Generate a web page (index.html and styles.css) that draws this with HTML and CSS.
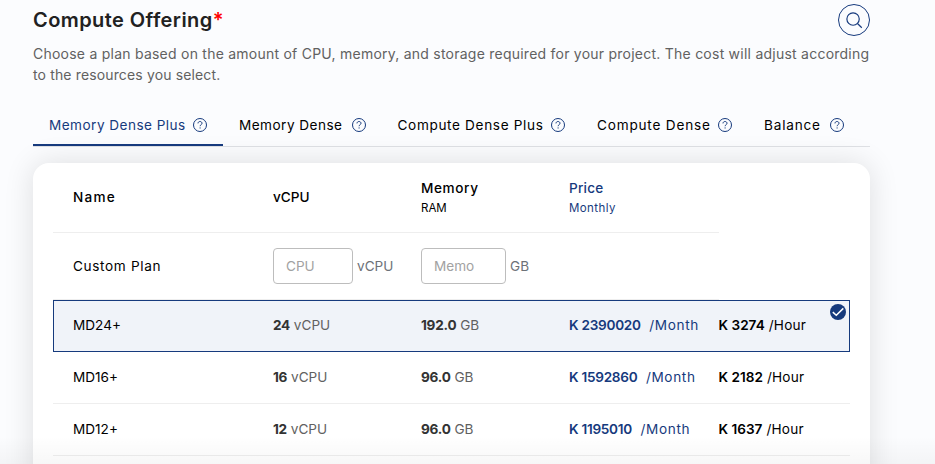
FILE: index.html
```html
<!DOCTYPE html>
<html lang="en">
<head>
<meta charset="utf-8">
<title>Compute Offering</title>
<link rel="stylesheet" href="styles.css">
</head>
<body>
<svg class="defs" aria-hidden="true">
  <symbol id="help" viewBox="0 0 14 14"><circle cx="7" cy="7" r="6.5"/><path d="M5 5.4C5.1 4.1 5.9 3.5 7 3.5s2 .7 2 1.8c0 1.4-1.9 1.4-1.9 2.9M7.1 9.4v1.1"/></symbol>
</svg>
<main class="page">
  <header class="heading">
    <h1 class="title">Compute Offering<span class="required">*</span></h1>
    <button class="search" aria-label="Search"><svg viewBox="0 0 32 32"><circle cx="15" cy="15" r="6.6"/><path d="M19.7 19.7l4.6 4.6"/></svg></button>
  </header>
  <p class="intro"><span class="line first">Choose a plan based on the amount of CPU, memory, and storage required for your project. The cost will adjust according</span> <span class="line second">to the resources you select.</span></p>
  <nav class="tabs">
    <a class="tab active"><span class="label">Memory Dense Plus</span><svg class="help"><use href="#help"/></svg></a>
    <a class="tab"><span class="label">Memory Dense</span><svg class="help"><use href="#help"/></svg></a>
    <a class="tab wide"><span class="label">Compute Dense Plus</span><svg class="help"><use href="#help"/></svg></a>
    <a class="tab wider"><span class="label">Compute Dense</span><svg class="help"><use href="#help"/></svg></a>
    <a class="tab wider"><span class="label">Balance</span><svg class="help"><use href="#help"/></svg></a>
  </nav>
  <section class="card">
    <div class="row head">
      <div class="th wide-name">Name</div>
      <div class="th">vCPU</div>
      <div class="th"><span class="memory-title">Memory</span><small>RAM</small></div>
      <div class="th blue">Price<small class="monthly">Monthly</small></div>
    </div>
    <div class="row custom">
      <div class="name custom-name">Custom Plan</div>
      <div class="field"><input class="cpu" placeholder="CPU"><span>vCPU</span></div>
      <div class="field"><input class="memory" placeholder="Memo"><span>GB</span></div>
    </div>
    <div class="row plan selected">
      <div class="name">MD24+</div>
      <div class="spec"><b>24</b> vCPU</div>
      <div class="spec"><b>192.0</b> GB</div>
      <div class="month"><b>K 2390020</b><span>/Month</span></div>
      <div class="hour"><b>K 3274</b> /Hour</div>
      <svg class="check" viewBox="0 0 16 16"><circle cx="8" cy="8" r="8"/><path d="M2.8 8.1l3.5 3.2 7-6.9"/></svg>
    </div>
    <div class="row plan">
      <div class="name">MD16+</div>
      <div class="spec"><b>16</b> vCPU</div>
      <div class="spec"><b>96.0</b> GB</div>
      <div class="month"><b>K 1592860</b><span>/Month</span></div>
      <div class="hour"><b>K 2182</b> /Hour</div>
    </div>
    <div class="row plan">
      <div class="name">MD12+</div>
      <div class="spec"><b>12</b> vCPU</div>
      <div class="spec"><b>96.0</b> GB</div>
      <div class="month"><b>K 1195010</b><span>/Month</span></div>
      <div class="hour"><b>K 1637</b> /Hour</div>
    </div>
  </section>
</main>
<div class="fade"></div>
</body>
</html>
```
FILE: styles.css
```css
* { box-sizing: border-box; }
body {
  margin: 0;
  height: 464px;
  background: #fbfcfe;
  color: #000;
  font: 400 13.6px/21px Inter, "Liberation Sans", sans-serif;
}
svg { fill: none; stroke: #163a7d; }
.defs { position: absolute; width: 0; height: 0; }
.page { width: 837px; height: 464px; overflow-x: visible; overflow-y: clip; margin-left: 33px; padding-top: 4px; }
.heading { display: flex; justify-content: space-between; height: 32px; }
.title { margin: 0; font-size: 20px; font-weight: 600; line-height: 32px; color: #212121; letter-spacing: .42px; }
.required { color: #f00; }
.search { width: 32px; height: 32px; padding: 0; border: 1px solid #163a7d; border-radius: 50%; background: none; }
.search svg { display: block; width: 30px; height: 30px; stroke-width: 1.25; }
.intro { margin: 7px 0 0; color: #616161; font-size: 14px; white-space: nowrap; }
.line { display: block; }
.first { letter-spacing: .238px; }
.second { letter-spacing: .14px; }
.tabs { display: grid; grid-template-columns: 190px 158.5px 199.5px 167px 112px; height: 43px; margin-top: 19px; border-bottom: 1px solid #dfe1e5; }
.tab { display: flex; align-items: center; justify-content: space-between; height: 42px; padding: 0 16px; white-space: nowrap; letter-spacing: .46px; }
.tab.wide { letter-spacing: .65px; }
.tab.wider { letter-spacing: .8px; }
.tab.active { color: #163a7d; border-bottom: 2px solid #163a7d; padding-top: 2px; }
.help { width: 14px; height: 14px; flex: none; }
.card { margin-top: 16px; height: 360px; padding: 0 20px; border-radius: 16px; background: #fff; box-shadow: 0 0 30px rgba(0, 0, 0, .12); }
.row { display: grid; grid-template-columns: 200px 148px 148px 149.5px 1fr; align-items: center; padding-left: 20px; }
.head { width: 666px; height: 70px; border-bottom: 1px solid #eee; font-weight: 500; }
.wide-name { letter-spacing: 1.2px; }
.memory-title { letter-spacing: .6px; }
.head small { display: block; font-size: 11.5px; line-height: 18px; font-weight: 400; }
.head .monthly { letter-spacing: .4px; }
.blue { color: #163a7d; letter-spacing: .2px; }
.custom { width: 666px; height: 67px; border-bottom: 1px solid #eee; }
.custom-name { letter-spacing: .65px; }
.field { display: flex; align-items: center; gap: 4px; color: #6d7178; }
input { height: 36px; padding: 0 12px; border: 1px solid #bdbdbd; border-radius: 4px; background: #fff; font: inherit; }
input::placeholder { color: #a2a2a2; }
.cpu { width: 80px; }
.memory { width: 85px; }
.plan { position: relative; height: 52px; border-bottom: 1px solid #eee; white-space: nowrap; }
.plan.selected { border: 1px solid #163a7d; background: #f0f3f9; padding: 0 0 1px 19px; }
.spec { color: #616161; }
.spec b { color: #333; font-weight: 700; letter-spacing: -.25px; }
.month { display: flex; gap: 8.5px; color: #163a7d; letter-spacing: .65px; }
.month b { letter-spacing: -.27px; }
.hour { letter-spacing: .2px; }
b { font-weight: 600; }
.hour b { letter-spacing: 0; }
.check { position: absolute; top: 3px; right: 3px; width: 16px; height: 16px; }
.check circle { fill: #163a7d; stroke: none; }
.check path { stroke: #fff; stroke-width: 1.5; }
.fade { position: absolute; left: 0; right: 0; top: 436px; height: 28px; background: linear-gradient(transparent, rgba(0, 0, 0, .03)); }
```
